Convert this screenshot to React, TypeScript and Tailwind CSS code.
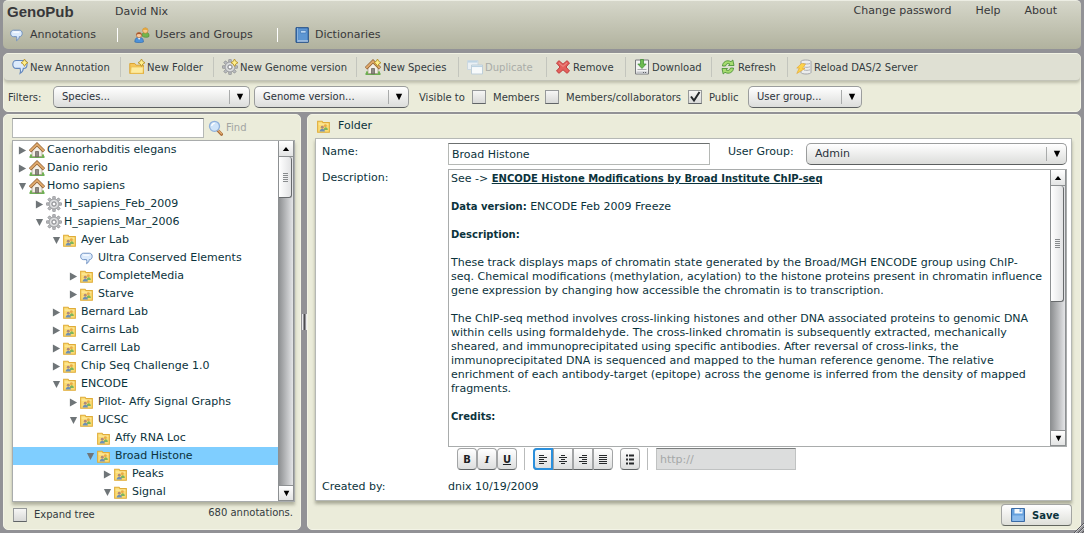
import React, { useState } from "react";

type IconProps = { className?: string };

const Svg = ({ children, className = "size-4" }: { children: React.ReactNode; className?: string }) => (
  <svg viewBox="0 0 16 16" className={`shrink-0 ${className}`} fill="none" aria-hidden="true">
    {children}
  </svg>
);

const Sparkle = () => (
  <path d="M12.5 0 13.8 2.4 16 3.7 13.8 5 12.5 7.4 11.2 5 9 3.7 11.2 2.4z" fill="#ffef8a" stroke="#b08a1e" strokeWidth=".8" />
);

const BubbleShape = () => (
  <path
    d="M4.2 1.5h7.4c2 0 3.4 1.500 3.400 3.900s-1.400 4-3.400 4h-.3c0 1.900-.8 3.500-3.200 5 .6-1.700.5-3.300 0-5H4.200C2.200 9.400.8 7.800.8 5.400s1.400-3.900 3.400-3.900z"
    fill="#dcebfc"
    stroke="#6488bd"
    strokeWidth="1.1"
  />
);

const BubbleIcon = ({ className }: IconProps) => (
  <Svg className={className}>
    <BubbleShape />
    <path d="M4 3.800h7.500" stroke="#fff" strokeWidth="1.500" />
  </Svg>
);

const NewBubbleIcon = () => (
  <Svg>
    <BubbleShape />
    <Sparkle />
  </Svg>
);

const NewFolderIcon = () => (
  <Svg>
    <path d="M.8 14.5V4.500h5l1.300 1.700h7.400v8.300z" fill="#f6c65a" stroke="#dba536" />
    <path d="M1.500 14.300 2.200 8h12.200l-.4 6.300z" fill="#fdeb9e" stroke="#e9bd4e" strokeWidth=".7" />
    <Sparkle />
  </Svg>
);

const teeth = [0, 45, 90, 135, 180, 225, 270, 315];

const GearShape = () => (
  <>
    {teeth.map((a) => (
      <rect key={a} x="6.7" y=".4" width="2.6" height="3.5" rx=".5" fill="#b9bbbe" stroke="#808285" strokeWidth=".6" transform={`rotate(${a} 8 8)`} />
    ))}
    <circle cx="8" cy="8" r="5" fill="#c6c8ca" stroke="#8e9093" strokeWidth=".6" />
    <circle cx="8" cy="8" r="3.600" stroke="#e2e3e4" />
    <circle cx="8" cy="8" r="2" fill="#fff" stroke="#7d7e82" strokeWidth=".9" />
  </>
);

const GearIcon = ({ className }: IconProps) => (
  <Svg className={className}>
    <GearShape />
  </Svg>
);

const NewGearIcon = () => (
  <Svg>
    <GearShape />
    <Sparkle />
  </Svg>
);

const HouseShape = () => (
  <>
    <path d="M.5 15h15" stroke="#5fa843" strokeWidth="1.800" />
    <path d="M3 8 8 3l5 5v6.500H3z" fill="#f3efe6" stroke="#a59a88" strokeWidth=".7" />
    <path d="M6.500 9.500h3v5.300h-3z" fill="#8e8a84" stroke="#665f57" strokeWidth=".7" />
    <path d="M1 9.300 8 2.300l7 7" stroke="#8c5c2e" strokeWidth="3.200" />
    <path d="M1.200 9 8 2.300 14.800 9" stroke="#dfa96c" strokeWidth="2" />
    <circle cx="2" cy="13.300" r="1.100" fill="#6db14c" />
    <circle cx="14" cy="13.300" r="1.100" fill="#6db14c" />
  </>
);

const HouseIcon = ({ className }: IconProps) => (
  <Svg className={className}>
    <HouseShape />
  </Svg>
);

const NewHouseIcon = () => (
  <Svg>
    <HouseShape />
    <Sparkle />
  </Svg>
);

const DuplicateIcon = () => (
  <Svg>
    <path d="M.5 1.500h10.500v9H.5z" fill="#eaf0f4" stroke="#ccd8df" />
    <path d="M1 2.800h9.500" stroke="#bcd3e3" strokeWidth="1.500" />
    <path d="M4.500 6h11v9h-11z" fill="#f7fafb" stroke="#bfcfd9" />
    <path d="M5 7.300h10" stroke="#bcd3e3" strokeWidth="1.500" />
  </Svg>
);

const RemoveIcon = () => (
  <Svg>
    <path d="M1.500 4 4 1.700l4 3.500 4-3.500L14.500 4 11 8l3.500 4L12 14.300l-4-3.500-4 3.500L1.500 12 5 8z" fill="#e4605c" stroke="#bf3c3c" strokeLinejoin="round" />
    <path d="m4 3.800 4 3.600 4-3.600" stroke="#f3a19b" strokeWidth=".8" />
  </Svg>
);

const DownloadIcon = () => (
  <Svg>
    <path d="M1.500 1h13v14h-13z" fill="#f2f2f2" stroke="#77797c" />
    <path d="M2.500 12.500h11v2h-11z" fill="#c4c6ca" />
    <path d="M9 13.500h1m1 0h1" stroke="#5d6166" />
    <path d="M6.500.5h3V5h2.700L8 9.500 3.800 5h2.700z" fill="#6dbb50" stroke="#3b8a30" strokeWidth=".7" />
    <path d="M3.500 10.500h9" stroke="#a9abad" />
  </Svg>
);

const RefreshIcon = () => (
  <Svg>
    <path d="M2.500 7C2.500 3 7 .3 11 2.700L12.800 1 14 6.500H8.500l1.300-1.600C8 3.800 6 4.800 5.500 7z" fill="#a8dc70" stroke="#3f8a2c" strokeWidth=".8" />
    <path d="M13.500 9c0 4-4.500 6.700-8.500 4.300L3.200 15 2 9.500h5.500l-1.300 1.600c1.800 1.100 3.800.1 4.300-2.100z" fill="#a8dc70" stroke="#3f8a2c" strokeWidth=".8" />
  </Svg>
);

const ReloadIcon = () => (
  <Svg>
    <path d="M5 2.500c0-2 9.500-2 10 0v11c-.5 2-9.500 2-10 0z" fill="#eceded" stroke="#9b9da1" strokeWidth=".9" />
    <path d="M7 4.500c2 .7 5 .7 7 0M8 8c2 .5 4 .5 6-.2M8 11c2 .5 4 .5 6-.2" stroke="#aeb1b5" />
    <path d="M5.500 4.500.8 9h2.500L.8 14.500 9 9.500H6.500l3-4.500z" fill="#fcd34a" stroke="#e5a938" strokeWidth=".7" />
  </Svg>
);

const UsersIcon = ({ className }: IconProps) => (
  <Svg className={className}>
    <path d="M8 9c0-3 1.500-4 3.500-4S15.500 6.500 15 9.500c-1.500 1.200-5 1.200-7-.5z" fill="#72b44c" stroke="#4b8836" strokeWidth=".6" />
    <circle cx="11.300" cy="3.600" r="2.700" fill="#f7c98b" stroke="#ba7d2c" strokeWidth=".6" />
    <path d="M8.500 3.400C8.500 0 14 0 14 3.400 12 2.500 10.500 2.300 8.500 3.400z" fill="#e3a63b" />
    <path d="M.8 15c0-3.500 1.500-4.700 4.200-4.700s4.500 1.200 4.500 4.700c-2 .9-6.500.9-8.700 0z" fill="#4d92d9" stroke="#2d67a6" strokeWidth=".6" />
    <path d="m3.800 10.500 1.300 2.500 1.300-2.500z" fill="#fff" />
    <circle cx="5" cy="8" r="2.700" fill="#f9c99c" stroke="#a65f33" strokeWidth=".6" />
    <path d="M2.200 8c0-3.500 5.600-3.500 5.600 0-1.800-1.200-3.800-1.200-5.600 0z" fill="#a4552c" />
  </Svg>
);

const BookIcon = ({ className }: IconProps) => (
  <Svg className={className}>
    <path d="M2 .7h12.300v14.600H2z" fill="#3e74b4" stroke="#23518a" />
    <path d="M4.500 1.500h9v12h-9z" fill="#5d96d3" />
    <path d="M3.700 1v14" stroke="#9cc2e8" />
    <path d="M6.500 3.500H12V6H6.500z" fill="#b9d6f2" stroke="#3b70ae" strokeWidth=".6" />
    <path d="M4 14h10" stroke="#e9f1f9" />
  </Svg>
);

const FolderIcon = ({ className }: IconProps) => (
  <Svg className={className}>
    <path d="M.8 15V1.500h5.400l1.200 1.700h7.800V15z" fill="#fbdc74" stroke="#e0ac38" strokeWidth="1.300" />
    <path d="M2 5h12" stroke="#fff1b5" />
    <circle cx="10.300" cy="7" r="1.800" fill="#e9ab48" />
    <path d="M8.300 12.300c0-4.300 5-4.300 5 0z" fill="#7db45c" />
    <circle cx="6.500" cy="9" r="1.800" fill="#b08a78" />
    <path d="M3.300 14c0-4.500 6.400-4.500 6.400 0z" fill="#6d90b6" />
  </Svg>
);

const SearchIcon = () => (
  <Svg>
    <path d="m9.500 10 4 4.300" stroke="#a86a35" strokeWidth="3" strokeLinecap="round" />
    <path d="m10 10 3.500 3.800" stroke="#e2ac72" strokeWidth="1.300" strokeLinecap="round" />
    <circle cx="6.500" cy="6.300" r="5" fill="#cfe4f9" stroke="#8fb0da" strokeWidth="1.300" />
    <path d="M3.700 6c.2-1.700 1.400-2.600 3-2.700" stroke="#fff" strokeWidth="1.300" />
  </Svg>
);

const SaveIcon = () => (
  <Svg>
    <path d="M1.500 1.500h13v13h-13z" fill="#65a0dd" stroke="#3a6ba5" />
    <path d="M4.500 2h8v4.500h-8z" fill="#f3f8fd" />
    <path d="M9.500 2h2v3h-2z" fill="#7fb0e2" />
    <path d="M2.500 8.500h11V14h-11z" fill="#8dbcec" />
  </Svg>
);

const Triangle = ({ dir }: { dir: "right" | "down" | "up" }) => {
  const d = { right: "M1 0.500v9l8-4.500z", down: "M1 1h8L5 9z", up: "M1 7.500h8L5 2.500z" }[dir];
  return (
    <svg viewBox="0 0 10 10" className="size-full" aria-hidden="true">
      <path d={d} fill="currentColor" />
    </svg>
  );
};

function Combo({ id, label, options, className, text = "text-[10px]" }: { id: string; label?: string; options: string[]; className: string; text?: string }) {
  return (
    <div className={`relative ${className}`}>
      <select
        id={id}
        aria-label={label}
        className={`h-[22px] w-full appearance-none rounded-[5px] border border-[#9b9d9d] border-b-[#5c5f60] bg-linear-to-b from-white to-[#dcdddb] pr-6 pl-2 leading-5 text-[#2b333c] outline-none ${text}`}
      >
        {options.map((o) => (
          <option key={o}>{o}</option>
        ))}
      </select>
      <span className="pointer-events-none absolute inset-y-1 right-0 flex w-[21px] items-center justify-center border-l border-[#a9abab] text-black">
        <span className="size-2">
          <Triangle dir="down" />
        </span>
      </span>
    </div>
  );
}

function Check({ label, checked = false, className = "" }: { label: string; checked?: boolean; className?: string }) {
  const [on, setOn] = useState(checked);
  return (
    <label className={`flex items-center gap-[7px] whitespace-nowrap ${className}`}>
      <span className="grid size-3.5 shrink-0">
        <input
          type="checkbox"
          checked={on}
          onChange={() => setOn(!on)}
          className="col-start-1 row-start-1 size-3.5 appearance-none border border-[#96999a] border-b-[#606466] bg-linear-to-b from-[#f6f6f5] to-[#d8d9d7]"
        />
        {on && (
          <svg viewBox="0 0 14 14" className="pointer-events-none col-start-1 row-start-1 size-3.5" aria-hidden="true">
            <path d="M3 6.500 6 10.500 11.500 2" stroke="#22262a" strokeWidth="2" fill="none" />
          </svg>
        )}
      </span>
      {label}
    </label>
  );
}

function ScrollBar({ thumb }: { thumb: string }) {
  return (
    <div className="flex w-4 shrink-0 flex-col border-x border-[#8d9092] bg-linear-to-r from-[#8f9193] to-[#e4e5e7]">
      <button type="button" aria-label="Scroll up" className="flex h-4 items-center justify-center border-b border-[#8d9092] bg-linear-to-b from-white to-[#e3e4e4] text-black">
        <span className="size-2">
          <Triangle dir="up" />
        </span>
      </button>
      <div className="flex-1">
        <div className={`flex w-[13px] flex-col items-center justify-center gap-px rounded-r-[3px] border-r border-b border-[#686b6d] bg-linear-to-r from-white to-[#e2e3e4] ${thumb}`}>
          {[0, 1, 2, 3, 4].map((i) => (
            <span key={i} className="h-px w-[5px] bg-[#888b8d]" />
          ))}
        </div>
      </div>
      <button type="button" aria-label="Scroll down" className="flex h-4 items-center justify-center border-y border-[#8d9092] bg-linear-to-b from-white to-[#e3e4e4] text-black">
        <span className="size-[7px]">
          <Triangle dir="down" />
        </span>
      </button>
    </div>
  );
}

type Node = { label: string; level: number; icon: "house" | "gear" | "folder" | "bubble"; open?: boolean };

const nodes: Node[] = [
  { label: "Caenorhabditis elegans", level: 0, icon: "house", open: false },
  { label: "Danio rerio", level: 0, icon: "house", open: false },
  { label: "Homo sapiens", level: 0, icon: "house", open: true },
  { label: "H_sapiens_Feb_2009", level: 1, icon: "gear", open: false },
  { label: "H_sapiens_Mar_2006", level: 1, icon: "gear", open: true },
  { label: "Ayer Lab", level: 2, icon: "folder", open: true },
  { label: "Ultra Conserved Elements", level: 3, icon: "bubble" },
  { label: "CompleteMedia", level: 3, icon: "folder", open: false },
  { label: "Starve", level: 3, icon: "folder", open: false },
  { label: "Bernard Lab", level: 2, icon: "folder", open: false },
  { label: "Cairns Lab", level: 2, icon: "folder", open: false },
  { label: "Carrell Lab", level: 2, icon: "folder", open: false },
  { label: "Chip Seq Challenge 1.0", level: 2, icon: "folder", open: false },
  { label: "ENCODE", level: 2, icon: "folder", open: true },
  { label: "Pilot- Affy Signal Graphs", level: 3, icon: "folder", open: false },
  { label: "UCSC", level: 3, icon: "folder", open: true },
  { label: "Affy RNA Loc", level: 4, icon: "folder" },
  { label: "Broad Histone", level: 4, icon: "folder", open: true },
  { label: "Peaks", level: 5, icon: "folder", open: false },
  { label: "Signal", level: 5, icon: "folder", open: true },
];

const indents = ["pl-[5px]", "pl-[22px]", "pl-[39px]", "pl-[56px]", "pl-[73px]", "pl-[90px]"];

function NodeIcon({ icon }: { icon: Node["icon"] }) {
  if (icon === "house") return <HouseIcon />;
  if (icon === "gear") return <GearIcon />;
  if (icon === "bubble") return <BubbleIcon className="mr-[3px] size-[13px]" />;
  return <FolderIcon className="mr-[3px] size-[13px]" />;
}

const tools = [
  { label: "New Annotation", icon: <NewBubbleIcon />, width: "w-[116px]" },
  { label: "New Folder", icon: <NewFolderIcon />, width: "w-[93px]" },
  { label: "New Genome version", icon: <NewGearIcon />, width: "w-[143px]" },
  { label: "New Species", icon: <NewHouseIcon />, width: "w-[102px]" },
  { label: "Duplicate", icon: <DuplicateIcon />, width: "w-[88px]", disabled: true },
  { label: "Remove", icon: <RemoveIcon />, width: "w-[79px]" },
  { label: "Download", icon: <DownloadIcon />, width: "w-[86px]" },
  { label: "Refresh", icon: <RefreshIcon />, width: "w-[76px]" },
  { label: "Reload DAS/2 Server", icon: <ReloadIcon />, width: "w-[150px]" },
];

const bars: Record<string, string> = {
  left: "M1 1.500h5M1 3.500h8M1 5.500h5M1 7.500h8M1 9.500h5",
  center: "M3 1.500h4M1 3.500h8M3 5.500h4M1 7.500h8M3 9.500h4",
  right: "M4 1.500h5M1 3.500h8M4 5.500h5M1 7.500h8M4 9.500h5",
  justify: "M1 1.500h8M1 3.500h8M1 5.500h8M1 7.500h8M1 9.500h8",
};

const formatButton = "flex h-[22px] w-5 items-center justify-center border border-[#a3a5a6] border-b-[#5f6365] bg-linear-to-b from-white to-[#dddede] text-[10px] font-bold text-[#1d2225]";
const panel = "rounded-[5px] border border-[#f3f4e6] bg-[#ebecda]";

export default function App() {
  return (
    <div className="flex min-h-screen flex-col bg-[#929296] px-[3px] pb-[3px] font-['DejaVu_Sans',Verdana,sans-serif] text-[10px] text-[#333b40]">
      <header className="h-[49px] rounded-[5px] border-t border-[#ecede3] bg-linear-to-b from-[#d6d7ca] to-[#b1b29e] px-1 text-[11px] text-[#38383a]">
        <div className="flex h-[22px] items-center">
          <h1 className="w-[108px] font-['Liberation_Sans',Arial,sans-serif] text-[15px] font-bold">GenoPub</h1>
          <span>David Nix</span>
          <nav aria-label="Account" className="ml-auto flex gap-6 pr-5 pb-0.5">
            <a href="#password">Change password</a>
            <a href="#help">Help</a>
            <a href="#about">About</a>
          </nav>
        </div>
        <nav aria-label="Sections" className="flex h-6 items-center">
          <a href="#annotations" className="flex w-[110px] items-center gap-[7px] pl-[3px]">
            <BubbleIcon className="size-[13px]" />
            Annotations
          </a>
          <a href="#users" className="flex h-3.5 w-40 items-center gap-[5px] border-l border-white pl-4">
            <UsersIcon />
            Users and Groups
          </a>
          <a href="#dictionaries" className="flex h-3.5 items-center gap-[5px] border-l border-white pl-4">
            <BookIcon />
            Dictionaries
          </a>
        </nav>
      </header>

      <section className="mt-1 rounded-[5px] border border-[#f3f4e6] bg-[#ebecda] pb-0.5">
        <div role="toolbar" aria-label="Actions" className="flex h-[27px] items-center rounded-[4px] border-b border-[#c2c3b7] bg-[#dfe0d3] shadow-[0_2px_3px_rgba(90,90,70,0.3)]">
          {tools.map((t, i) => (
            <button
              key={t.label}
              disabled={t.disabled}
              className={`flex h-5 items-center gap-0.5 whitespace-nowrap pl-2 ${t.width} ${i > 0 ? "border-l border-[#c3c5bd]" : ""} ${t.disabled ? "text-[#a9aca8]" : ""}`}
            >
              {t.icon}
              {t.label}
            </button>
          ))}
        </div>
        <div className="mt-1 flex h-6 items-center pl-1">
          <span className="w-[45px]">Filters:</span>
          <Combo id="species" label="Species" options={["Species..."]} className="w-[197px]" />
          <Combo id="genome" label="Genome version" options={["Genome version..."]} className="ml-1 w-[155px]" />
          <span className="ml-2.5 w-[53px] whitespace-nowrap">Visible to</span>
          <Check label="Members" className="w-[73px]" />
          <Check label="Members/collaborators" className="w-[143px]" />
          <Check label="Public" checked className="w-[60px]" />
          <Combo id="filter-group" label="User group" options={["User group..."]} className="w-[114px]" />
        </div>
      </section>

      <main className="mt-0.5 flex flex-1">
        <aside className={`flex w-[298px] shrink-0 flex-col pr-[5px] pl-2 ${panel}`}>
          <div className="flex h-[25px] items-center">
            <input aria-label="Search tree" className="h-5 w-48 border border-[#b5b8b5] border-t-[#6c7070] bg-white px-1 outline-none" />
            <button disabled className="flex items-center gap-0.5 pl-1 text-[#a2a5a2]">
              <SearchIcon />
              Find
            </button>
          </div>
          <div className="flex border border-[#a9acac] bg-white shadow-[0_3px_3px_rgba(90,90,70,0.4)]">
            <ul role="tree" aria-label="Annotations" className="min-w-0 flex-1 text-[11px] text-[#0b333c]">
              {nodes.map((n) => (
                <li
                  key={n.label}
                  role="treeitem"
                  aria-expanded={n.open}
                  className={`flex h-[18px] items-center whitespace-nowrap ${indents[n.level]} ${n.label === "Broad Histone" ? "bg-[#7fceff]" : ""}`}
                >
                  <span className="mr-0.5 size-[9px] shrink-0 text-[#6f7578]">{n.open !== undefined && <Triangle dir={n.open ? "down" : "right"} />}</span>
                  <NodeIcon icon={n.icon} />
                  <span className="ml-0.5">{n.label}</span>
                </li>
              ))}
            </ul>
            <ScrollBar thumb="h-[41px]" />
          </div>
          <div className="flex items-start justify-between pt-[3px] pr-0.5 pl-px">
            <Check label="Expand tree" className="pt-0.5" />
            <span>680 annotations.</span>
          </div>
        </aside>

        <div className="flex w-1.5 shrink-0 items-center justify-center gap-px">
          <span className="h-4 w-px bg-[#e8e8ea]" />
          <span className="h-4 w-px bg-[#4d4d50]" />
          <span className="h-4 w-px bg-[#e8e8ea]" />
        </div>

        <section className={`flex min-w-0 flex-1 flex-col pr-2 pl-[7px] ${panel}`}>
          <h2 className="flex h-[23px] items-center gap-2 pl-0.5 text-[11px] text-[#0b333c]">
            <FolderIcon className="size-[13px]" />
            Folder
          </h2>
          <form className="border border-[#b5b8b5] bg-white pr-1 pl-1.5 text-[11px] text-[#0b333c] shadow-[0_3px_3px_rgba(90,90,70,0.45)]" onSubmit={(e) => e.preventDefault()}>
            <div className="flex pt-1">
              <label htmlFor="name" className="w-[126px] pt-px">
                Name:
              </label>
              <input id="name" defaultValue="Broad Histone" className="h-[22px] w-[262px] border border-[#b5b8b5] border-t-[#6c7070] px-[3px] outline-none" />
              <label htmlFor="user-group" className="w-24 pt-px pl-[18px] whitespace-nowrap">
                User Group:
              </label>
              <Combo id="user-group" options={["Admin"]} className="flex-1" text="text-[11px]" />
            </div>
            <div className="flex pt-1">
              <span id="description" className="w-[126px] shrink-0 pt-px">
                Description:
              </span>
              <div className="flex h-[278px] min-w-0 flex-1 border border-[#a9acac]">
                <div
                  role="textbox"
                  aria-multiline="true"
                  aria-labelledby="description"
                  contentEditable
                  suppressContentEditableWarning
                  className="min-w-0 flex-1 overflow-hidden pt-0.5 pl-0.5 text-[11px] leading-[14px] outline-none"
                >
                  <p>
                    See -&gt;{" "}
                    <a href="#encode" className="text-[10px] font-bold underline">
                      ENCODE Histone Modifications by Broad Institute ChIP-seq
                    </a>
                  </p>
                  <p className="mt-3.5">
                    <b className="text-[10px]">Data version:</b> ENCODE Feb 2009 Freeze
                  </p>
                  <p className="mt-3.5">
                    <b className="text-[10px]">Description:</b>
                  </p>
                  <p className="mt-3.5">
                    These track displays maps of chromatin state generated by the Broad/MGH ENCODE group using ChIP-
                    <br />
                    seq. Chemical modifications (methylation, acylation) to the histone proteins present in chromatin influence
                    <br />
                    gene expression by changing how accessible the chromatin is to transcription.
                  </p>
                  <p className="mt-3.5">
                    The ChIP-seq method involves cross-linking histones and other DNA associated proteins to genomic DNA
                    <br />
                    within cells using formaldehyde. The cross-linked chromatin is subsequently extracted, mechanically
                    <br />
                    sheared, and immunoprecipitated using specific antibodies. After reversal of cross-links, the
                    <br />
                    immunoprecipitated DNA is sequenced and mapped to the human reference genome. The relative
                    <br />
                    enrichment of each antibody-target (epitope) across the genome is inferred from the density of mapped
                    <br />
                    fragments.
                  </p>
                  <p className="mt-3.5">
                    <b className="text-[10px]">Credits:</b>
                  </p>
                </div>
                <ScrollBar thumb="h-[116px]" />
              </div>
            </div>
            <div role="toolbar" aria-label="Formatting" className="flex h-6 items-center pl-[135px]">
              <button type="button" aria-label="Bold" className={`rounded-[4px] ${formatButton}`}>B</button>
              <button type="button" aria-label="Italic" className={`rounded-[4px] font-['DejaVu_Serif',serif] italic ${formatButton}`}>I</button>
              <button type="button" aria-label="Underline" className={`rounded-[4px] underline ${formatButton}`}>U</button>
              <span className="mr-2 ml-[7px] h-[22px] w-px bg-[#b9bbbb]" />
              {Object.keys(bars).map((k) => (
                <button
                  key={k}
                  type="button"
                  aria-label={`Align ${k}`}
                  className={`${formatButton} ${k === "left" ? "rounded-l-[4px] outline-2 -outline-offset-2 outline-[#2a8fdc]" : ""} ${k === "justify" ? "rounded-r-[4px]" : ""}`}
                >
                  <svg viewBox="0 0 10 11" className="h-[11px] w-2.5" aria-hidden="true">
                    <path d={bars[k]} stroke="#26292b" />
                  </svg>
                </button>
              ))}
              <button type="button" aria-label="Bulleted list" className={`ml-[7px] rounded-[4px] ${formatButton}`}>
                <svg viewBox="0 0 10 11" className="h-[11px] w-2.5" aria-hidden="true">
                  <path d="M1 1.500h2M1 5.500h2M1 9.500h2M4 1.500h5M4 5.500h5M4 9.500h5" stroke="#26292b" strokeWidth="2" />
                </svg>
              </button>
              <span className="mr-2 ml-[7px] h-[22px] w-px bg-[#b9bbbb]" />
              <input aria-label="Link address" disabled placeholder="http://" className="h-[22px] w-[140px] border border-[#c0c2c2] border-t-[#7b7e7e] bg-[#dcdddd] px-[3px] placeholder:text-[#a5a8a8]" />
            </div>
            <div className="flex h-[29px] items-center pt-1">
              <span className="w-[126px]">Created by:</span>
              <span>dnix 10/19/2009</span>
            </div>
          </form>
          <div className="flex justify-end pt-[3px]">
            <button className="flex h-[22px] w-[71px] items-center gap-1.5 rounded-[4px] border border-[#a3a5a2] border-b-[#62665f] bg-linear-to-b from-white to-[#dedfd9] pl-2 font-bold text-[#0b333c]">
              <SaveIcon />
              Save
            </button>
          </div>
        </section>
      </main>

      <svg viewBox="0 0 10 10" className="pointer-events-none absolute right-0 bottom-0 size-2.5" aria-hidden="true">
        <path d="M0 10 10 0M4 10 10 4M8 10 10 8" stroke="#55555a" />
        <path d="M1 10 10 1M5 10 10 5" stroke="#e0e0e2" strokeWidth=".7" />
      </svg>
    </div>
  );
}
